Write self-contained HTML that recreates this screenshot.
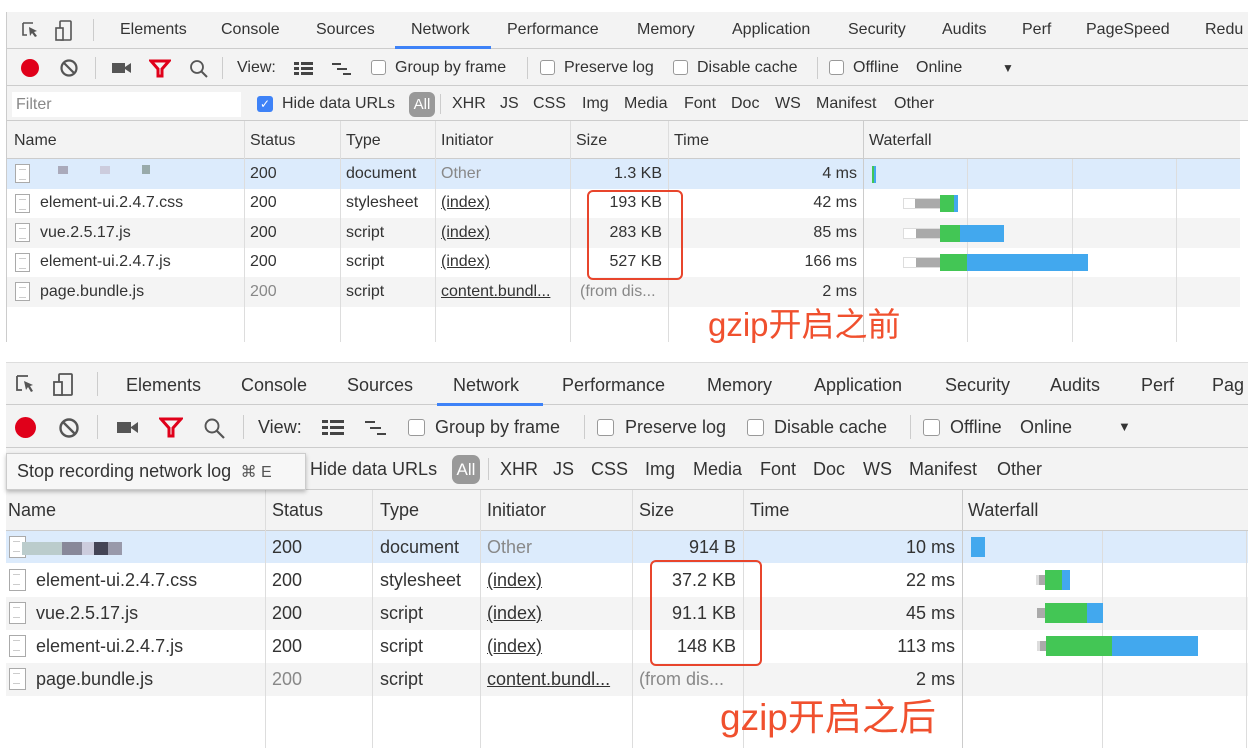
<!DOCTYPE html>
<html><head><meta charset="utf-8"><style>
*{margin:0;padding:0;box-sizing:border-box}
body{width:1248px;height:748px;background:#fff;position:relative;overflow:hidden;font-family:"Liberation Sans",Arial,sans-serif;color:#333}
.a{position:absolute}
.t{position:absolute;white-space:nowrap;line-height:20px}
.p1 .t{font-size:16px}
.p2 .t{font-size:18px;line-height:22px}
.bar{position:absolute;background:#f3f3f3}
.bl{position:absolute;background:#ccc}
.cb{position:absolute;width:15px;height:15px;border:1px solid #999;border-radius:3px;background:#fff}
.vl{position:absolute;width:1px;background:#ddd}
.rec{position:absolute;border-radius:50%;background:#e0001a}
.g{color:#888}
.u{text-decoration:underline}
.fi{position:absolute;width:15px;height:19px;border:1px solid #aaa;background:#fff}
.fi:after{content:"";position:absolute;left:3px;top:4px;width:7px;height:9px;border-top:1px solid #ccc;border-bottom:1px solid #ccc;}
.r{text-align:right}
.red{position:absolute;color:#f0502e;font-family:"Liberation Sans","Noto Sans CJK SC",sans-serif;white-space:nowrap}
</style></head><body>

<div class="p1">
<div class="bar" style="left:6px;top:12px;width:1242px;height:37px;border-bottom:1px solid #ccc"></div>
<div class="bar" style="left:6px;top:49px;width:1242px;height:37px;border-bottom:1px solid #ccc"></div>
<div class="bar" style="left:6px;top:86px;width:1242px;height:35px;border-bottom:1px solid #ccc"></div>
<div class="bar" style="left:6px;top:121px;width:1234px;height:38px;border-bottom:1px solid #ccc"></div>
<div class="a" style="left:6px;top:12px;width:1px;height:330px;background:#ccc"></div>
<div class="a" style="left:395px;top:46px;width:96px;height:3px;background:#3e82f7"></div>
<svg class="a" style="left:20px;top:19px" width="60" height="24"><path d="M3 4h10M3 4v12h4" stroke="#555" stroke-width="1.6" fill="none"/><path d="M9 8l8 4-3 1 3 4-2 1-3-4-2 3z" fill="#555"/><rect x="40" y="2" width="11" height="19" rx="1" stroke="#555" stroke-width="1.6" fill="none"/><rect x="36" y="9" width="7" height="12" stroke="#555" stroke-width="1.6" fill="#f3f3f3"/></svg>
<div class="bl" style="left:93px;top:19px;width:1px;height:22px"></div>
<span class="t" style="left:120px;top:20px">Elements</span>
<span class="t" style="left:221px;top:20px">Console</span>
<span class="t" style="left:316px;top:20px">Sources</span>
<span class="t" style="left:411px;top:20px">Network</span>
<span class="t" style="left:507px;top:20px">Performance</span>
<span class="t" style="left:637px;top:20px">Memory</span>
<span class="t" style="left:732px;top:20px">Application</span>
<span class="t" style="left:848px;top:20px">Security</span>
<span class="t" style="left:942px;top:20px">Audits</span>
<span class="t" style="left:1022px;top:20px">Perf</span>
<span class="t" style="left:1086px;top:20px">PageSpeed</span>
<span class="t" style="left:1205px;top:20px">Redu</span>
<div class="rec" style="left:21px;top:59px;width:18px;height:18px"></div>
<svg class="a" style="left:59px;top:58px" width="20" height="20"><circle cx="10" cy="10" r="7.5" stroke="#555" stroke-width="2.2" fill="none"/><path d="M5 5l10 10" stroke="#555" stroke-width="2.2"/></svg>
<div class="bl" style="left:95px;top:57px;width:1px;height:22px"></div>
<svg class="a" style="left:111px;top:60px" width="22" height="16"><rect x="1" y="3" width="13" height="10" fill="#555"/><path d="M14 7l6-4v10l-6-4z" fill="#555"/></svg>
<svg class="a" style="left:149px;top:59px" width="22" height="20"><path d="M2 2h18l-7 8v7h-4v-7z" fill="none" stroke="#e0001a" stroke-width="3"/></svg>
<svg class="a" style="left:188px;top:58px" width="22" height="22"><circle cx="9" cy="9" r="6" stroke="#555" stroke-width="1.8" fill="none"/><path d="M13 13l6 6" stroke="#555" stroke-width="2"/></svg>
<div class="bl" style="left:222px;top:57px;width:1px;height:22px"></div>
<span class="t" style="left:237px;top:58px">View:</span>
<svg class="a" style="left:294px;top:60px" width="60" height="18"><g fill="#444"><rect x="0" y="2" width="5" height="3"/><rect x="7" y="2" width="12" height="3"/><rect x="0" y="7" width="5" height="3"/><rect x="7" y="7" width="12" height="3"/><rect x="0" y="12" width="5" height="3"/><rect x="7" y="12" width="12" height="3"/><rect x="38" y="3" width="9" height="2"/><rect x="43" y="8" width="10" height="2"/><rect x="49" y="13" width="8" height="2"/></g></svg>
<div class="cb" style="left:371px;top:60px"></div>
<span class="t" style="left:395px;top:58px">Group by frame</span>
<div class="bl" style="left:527px;top:57px;width:1px;height:22px"></div>
<div class="cb" style="left:540px;top:60px"></div>
<span class="t" style="left:564px;top:58px">Preserve log</span>
<div class="cb" style="left:673px;top:60px"></div>
<span class="t" style="left:697px;top:58px">Disable cache</span>
<div class="bl" style="left:817px;top:57px;width:1px;height:22px"></div>
<div class="cb" style="left:829px;top:60px"></div>
<span class="t" style="left:853px;top:58px">Offline</span>
<span class="t" style="left:916px;top:58px">Online</span>
<span class="t" style="left:1002px;top:58px;font-size:12px">▼</span>
<div class="a" style="left:12px;top:92px;width:229px;height:25px;background:#fff"></div>
<span class="t g" style="left:16px;top:95px">Filter</span>
<div class="a" style="left:257px;top:96px;width:16px;height:16px;background:#3e82f7;border-radius:3px;color:#fff;font-size:12px;line-height:16px;text-align:center">✓</div>
<span class="t" style="left:282px;top:94px">Hide data URLs</span>
<div class="a" style="left:409px;top:92px;width:26px;height:25px;background:#999;border-radius:6px;color:#fff;font-size:15px;line-height:25px;text-align:center">All</div>
<div class="bl" style="left:440px;top:94px;width:1px;height:20px"></div>
<span class="t" style="left:452px;top:94px">XHR</span>
<span class="t" style="left:500px;top:94px">JS</span>
<span class="t" style="left:533px;top:94px">CSS</span>
<span class="t" style="left:582px;top:94px">Img</span>
<span class="t" style="left:624px;top:94px">Media</span>
<span class="t" style="left:684px;top:94px">Font</span>
<span class="t" style="left:731px;top:94px">Doc</span>
<span class="t" style="left:775px;top:94px">WS</span>
<span class="t" style="left:816px;top:94px">Manifest</span>
<span class="t" style="left:894px;top:94px">Other</span>
<span class="t" style="left:14px;top:131px">Name</span>
<span class="t" style="left:250px;top:131px">Status</span>
<span class="t" style="left:346px;top:131px">Type</span>
<span class="t" style="left:441px;top:131px">Initiator</span>
<span class="t" style="left:576px;top:131px">Size</span>
<span class="t" style="left:674px;top:131px">Time</span>
<span class="t" style="left:869px;top:131px">Waterfall</span>
<div class="a" style="left:7px;top:159px;width:1233px;height:30px;background:#dcebfc"></div>
<div class="a" style="left:7px;top:218px;width:1233px;height:30px;background:#f4f4f4"></div>
<div class="a" style="left:7px;top:277px;width:1233px;height:30px;background:#f4f4f4"></div>
<div class="vl" style="left:244px;top:121px;height:221px"></div>
<div class="vl" style="left:340px;top:121px;height:221px"></div>
<div class="vl" style="left:435px;top:121px;height:221px"></div>
<div class="vl" style="left:570px;top:121px;height:221px"></div>
<div class="vl" style="left:668px;top:121px;height:221px"></div>
<div class="vl" style="left:863px;top:121px;height:221px;background:#ccc"></div>
<div class="vl" style="left:967px;top:159px;height:183px"></div>
<div class="vl" style="left:1072px;top:159px;height:183px"></div>
<div class="vl" style="left:1176px;top:159px;height:183px"></div>
<div class="fi" style="left:15px;top:164px"></div>
<div class="a" style="left:58px;top:166px;width:10px;height:8px;background:#aab"></div>
<div class="a" style="left:100px;top:166px;width:10px;height:8px;background:#ccd"></div>
<div class="a" style="left:142px;top:165px;width:8px;height:9px;background:#9aa"></div>
<div class="fi" style="left:15px;top:194px"></div>
<div class="fi" style="left:15px;top:223px"></div>
<div class="fi" style="left:15px;top:253px"></div>
<div class="fi" style="left:15px;top:282px"></div>
<span class="t" style="left:40px;top:193px">element-ui.2.4.7.css</span>
<span class="t" style="left:40px;top:223px">vue.2.5.17.js</span>
<span class="t" style="left:40px;top:252px">element-ui.2.4.7.js</span>
<span class="t" style="left:40px;top:282px">page.bundle.js</span>
<span class="t" style="left:250px;top:164px">200</span>
<span class="t" style="left:250px;top:193px">200</span>
<span class="t" style="left:250px;top:223px">200</span>
<span class="t" style="left:250px;top:252px">200</span>
<span class="t g" style="left:250px;top:282px">200</span>
<span class="t" style="left:346px;top:164px">document</span>
<span class="t" style="left:346px;top:193px">stylesheet</span>
<span class="t" style="left:346px;top:223px">script</span>
<span class="t" style="left:346px;top:252px">script</span>
<span class="t" style="left:346px;top:282px">script</span>
<span class="t g" style="left:441px;top:164px">Other</span>
<span class="t u" style="left:441px;top:193px">(index)</span>
<span class="t u" style="left:441px;top:223px">(index)</span>
<span class="t u" style="left:441px;top:252px">(index)</span>
<span class="t u" style="left:441px;top:282px">content.bundl...</span>
<span class="t r" style="left:570px;width:92px;top:164px">1.3 KB</span>
<span class="t r" style="left:570px;width:92px;top:193px">193 KB</span>
<span class="t r" style="left:570px;width:92px;top:223px">283 KB</span>
<span class="t r" style="left:570px;width:92px;top:252px">527 KB</span>
<span class="t g" style="left:580px;top:282px">(from dis...</span>
<span class="t r" style="left:668px;width:189px;top:164px">4 ms</span>
<span class="t r" style="left:668px;width:189px;top:193px">42 ms</span>
<span class="t r" style="left:668px;width:189px;top:223px">85 ms</span>
<span class="t r" style="left:668px;width:189px;top:252px">166 ms</span>
<span class="t r" style="left:668px;width:189px;top:282px">2 ms</span>
<div class="a" style="left:872px;top:166px;width:2px;height:17px;background:#43c655"></div>
<div class="a" style="left:874px;top:166px;width:2px;height:17px;background:#42a8ee"></div>
<div class="a" style="left:904px;top:199px;width:36px;height:9px;background:#aaa;border-left:11px solid #fff;outline:1px solid #ddd"></div>
<div class="a" style="left:940px;top:195px;width:14px;height:17px;background:#43c655"></div>
<div class="a" style="left:954px;top:195px;width:4px;height:17px;background:#42a8ee"></div>
<div class="a" style="left:904px;top:229px;width:36px;height:9px;background:#aaa;border-left:12px solid #fff;outline:1px solid #ddd"></div>
<div class="a" style="left:940px;top:225px;width:20px;height:17px;background:#43c655"></div>
<div class="a" style="left:960px;top:225px;width:44px;height:17px;background:#42a8ee"></div>
<div class="a" style="left:904px;top:258px;width:36px;height:9px;background:#aaa;border-left:12px solid #fff;outline:1px solid #ddd"></div>
<div class="a" style="left:940px;top:254px;width:27px;height:17px;background:#43c655"></div>
<div class="a" style="left:967px;top:254px;width:121px;height:17px;background:#42a8ee"></div>
</div>
<div class="a" style="left:587px;top:190px;width:96px;height:90px;border:2px solid #e8452c;border-radius:6px"></div>
<span class="red" style="left:708px;top:303px;font-size:33px;line-height:44px">gzip开启之前</span>

<div class="p2">
<div class="bar" style="left:6px;top:362px;width:1242px;height:43px;border-bottom:1px solid #ccc;border-top:1px solid #ddd"></div>
<div class="bar" style="left:6px;top:405px;width:1242px;height:43px;border-bottom:1px solid #ccc"></div>
<div class="bar" style="left:6px;top:448px;width:1242px;height:42px;border-bottom:1px solid #ccc"></div>
<div class="bar" style="left:6px;top:490px;width:1242px;height:41px;border-bottom:1px solid #ccc"></div>
<div class="a" style="left:437px;top:403px;width:106px;height:3px;background:#3e82f7"></div>
<svg class="a" style="left:14px;top:372px" width="70" height="26"><path d="M3 4h11M3 4v14h5" stroke="#555" stroke-width="1.8" fill="none"/><path d="M10 9l9 4-3 1 3 5-2 1-3-5-2 3z" fill="#555"/><rect x="45" y="2" width="13" height="21" rx="1" stroke="#555" stroke-width="1.8" fill="none"/><rect x="40" y="10" width="8" height="13" stroke="#555" stroke-width="1.8" fill="#f3f3f3"/></svg>
<div class="bl" style="left:97px;top:372px;width:1px;height:24px"></div>
<span class="t" style="left:126px;top:374px">Elements</span>
<span class="t" style="left:241px;top:374px">Console</span>
<span class="t" style="left:347px;top:374px">Sources</span>
<span class="t" style="left:453px;top:374px">Network</span>
<span class="t" style="left:562px;top:374px">Performance</span>
<span class="t" style="left:707px;top:374px">Memory</span>
<span class="t" style="left:814px;top:374px">Application</span>
<span class="t" style="left:945px;top:374px">Security</span>
<span class="t" style="left:1050px;top:374px">Audits</span>
<span class="t" style="left:1141px;top:374px">Perf</span>
<span class="t" style="left:1212px;top:374px">Pag</span>
<div class="rec" style="left:15px;top:417px;width:21px;height:21px"></div>
<svg class="a" style="left:57px;top:416px" width="24" height="24"><circle cx="12" cy="12" r="8.5" stroke="#555" stroke-width="2.4" fill="none"/><path d="M6 6l12 12" stroke="#555" stroke-width="2.4"/></svg>
<div class="bl" style="left:97px;top:415px;width:1px;height:24px"></div>
<svg class="a" style="left:116px;top:419px" width="24" height="18"><rect x="1" y="3" width="14" height="11" fill="#555"/><path d="M15 8l7-5v11l-7-5z" fill="#555"/></svg>
<svg class="a" style="left:159px;top:417px" width="24" height="22"><path d="M2 2h20l-8 9v8h-4v-8z" fill="none" stroke="#e0001a" stroke-width="3"/></svg>
<svg class="a" style="left:202px;top:416px" width="24" height="24"><circle cx="10" cy="10" r="6.5" stroke="#555" stroke-width="1.9" fill="none"/><path d="M15 15l7 7" stroke="#555" stroke-width="2.2"/></svg>
<div class="bl" style="left:243px;top:415px;width:1px;height:24px"></div>
<span class="t" style="left:258px;top:416px">View:</span>
<svg class="a" style="left:322px;top:418px" width="70" height="20"><g fill="#444"><rect x="0" y="2" width="6" height="3"/><rect x="8" y="2" width="14" height="3"/><rect x="0" y="8" width="6" height="3"/><rect x="8" y="8" width="14" height="3"/><rect x="0" y="14" width="6" height="3"/><rect x="8" y="14" width="14" height="3"/><rect x="43" y="3" width="10" height="2"/><rect x="48" y="9" width="11" height="2"/><rect x="55" y="15" width="9" height="2"/></g></svg>
<div class="cb" style="left:408px;top:419px;width:17px;height:17px"></div>
<span class="t" style="left:435px;top:416px">Group by frame</span>
<div class="bl" style="left:584px;top:415px;width:1px;height:24px"></div>
<div class="cb" style="left:597px;top:419px;width:17px;height:17px"></div>
<span class="t" style="left:625px;top:416px">Preserve log</span>
<div class="cb" style="left:747px;top:419px;width:17px;height:17px"></div>
<span class="t" style="left:774px;top:416px">Disable cache</span>
<div class="bl" style="left:910px;top:415px;width:1px;height:24px"></div>
<div class="cb" style="left:923px;top:419px;width:17px;height:17px"></div>
<span class="t" style="left:950px;top:416px">Offline</span>
<span class="t" style="left:1020px;top:416px">Online</span>
<span class="t" style="left:1118px;top:416px;font-size:13px">▼</span>
<span class="t" style="left:310px;top:458px">Hide data URLs</span>
<div class="a" style="left:452px;top:455px;width:28px;height:29px;background:#999;border-radius:7px;color:#fff;font-size:17px;line-height:29px;text-align:center">All</div>
<div class="bl" style="left:488px;top:458px;width:1px;height:22px"></div>
<span class="t" style="left:500px;top:458px">XHR</span>
<span class="t" style="left:553px;top:458px">JS</span>
<span class="t" style="left:591px;top:458px">CSS</span>
<span class="t" style="left:645px;top:458px">Img</span>
<span class="t" style="left:693px;top:458px">Media</span>
<span class="t" style="left:760px;top:458px">Font</span>
<span class="t" style="left:813px;top:458px">Doc</span>
<span class="t" style="left:863px;top:458px">WS</span>
<span class="t" style="left:909px;top:458px">Manifest</span>
<span class="t" style="left:997px;top:458px">Other</span>
<span class="t" style="left:8px;top:499px">Name</span>
<span class="t" style="left:272px;top:499px">Status</span>
<span class="t" style="left:380px;top:499px">Type</span>
<span class="t" style="left:487px;top:499px">Initiator</span>
<span class="t" style="left:639px;top:499px">Size</span>
<span class="t" style="left:750px;top:499px">Time</span>
<span class="t" style="left:968px;top:499px">Waterfall</span>
<div class="a" style="left:6px;top:531px;width:1242px;height:32px;background:#dcebfc"></div>
<div class="a" style="left:6px;top:597px;width:1242px;height:33px;background:#f4f4f4"></div>
<div class="a" style="left:6px;top:663px;width:1242px;height:33px;background:#f4f4f4"></div>
<div class="vl" style="left:265px;top:490px;height:258px"></div>
<div class="vl" style="left:372px;top:490px;height:258px"></div>
<div class="vl" style="left:480px;top:490px;height:258px"></div>
<div class="vl" style="left:632px;top:490px;height:258px"></div>
<div class="vl" style="left:743px;top:490px;height:258px"></div>
<div class="vl" style="left:962px;top:490px;height:258px;background:#ccc"></div>
<div class="vl" style="left:1102px;top:531px;height:217px"></div>
<div class="vl" style="left:1246px;top:531px;height:217px"></div>
<div class="fi" style="left:9px;top:536px;width:17px;height:22px"></div>
<div class="a" style="left:22px;top:542px;width:100px;height:13px;background:linear-gradient(90deg,#bcc 0 40%,#889 40% 60%,#ccd 60% 72%,#445 72% 86%,#99a 86%)"></div>
<div class="fi" style="left:9px;top:569px;width:17px;height:22px"></div>
<div class="fi" style="left:9px;top:602px;width:17px;height:22px"></div>
<div class="fi" style="left:9px;top:635px;width:17px;height:22px"></div>
<div class="fi" style="left:9px;top:668px;width:17px;height:22px"></div>
<span class="t" style="left:36px;top:569px">element-ui.2.4.7.css</span>
<span class="t" style="left:36px;top:602px">vue.2.5.17.js</span>
<span class="t" style="left:36px;top:635px">element-ui.2.4.7.js</span>
<span class="t" style="left:36px;top:668px">page.bundle.js</span>
<span class="t" style="left:272px;top:536px">200</span>
<span class="t" style="left:272px;top:569px">200</span>
<span class="t" style="left:272px;top:602px">200</span>
<span class="t" style="left:272px;top:635px">200</span>
<span class="t g" style="left:272px;top:668px">200</span>
<span class="t" style="left:380px;top:536px">document</span>
<span class="t" style="left:380px;top:569px">stylesheet</span>
<span class="t" style="left:380px;top:602px">script</span>
<span class="t" style="left:380px;top:635px">script</span>
<span class="t" style="left:380px;top:668px">script</span>
<span class="t g" style="left:487px;top:536px">Other</span>
<span class="t u" style="left:487px;top:569px">(index)</span>
<span class="t u" style="left:487px;top:602px">(index)</span>
<span class="t u" style="left:487px;top:635px">(index)</span>
<span class="t u" style="left:487px;top:668px">content.bundl...</span>
<span class="t r" style="left:632px;width:104px;top:536px">914 B</span>
<span class="t r" style="left:632px;width:104px;top:569px">37.2 KB</span>
<span class="t r" style="left:632px;width:104px;top:602px">91.1 KB</span>
<span class="t r" style="left:632px;width:104px;top:635px">148 KB</span>
<span class="t g" style="left:639px;top:668px">(from dis...</span>
<span class="t r" style="left:743px;width:212px;top:536px">10 ms</span>
<span class="t r" style="left:743px;width:212px;top:569px">22 ms</span>
<span class="t r" style="left:743px;width:212px;top:602px">45 ms</span>
<span class="t r" style="left:743px;width:212px;top:635px">113 ms</span>
<span class="t r" style="left:743px;width:212px;top:668px">2 ms</span>
<div class="a" style="left:971px;top:537px;width:14px;height:20px;background:#42a8ee"></div>
<div class="a" style="left:1036px;top:575px;width:9px;height:10px;background:#aaa;border-left:3px solid #ddd"></div>
<div class="a" style="left:1045px;top:570px;width:17px;height:20px;background:#43c655"></div>
<div class="a" style="left:1062px;top:570px;width:8px;height:20px;background:#42a8ee"></div>
<div class="a" style="left:1037px;top:608px;width:8px;height:10px;background:#aaa"></div>
<div class="a" style="left:1045px;top:603px;width:42px;height:20px;background:#43c655"></div>
<div class="a" style="left:1087px;top:603px;width:16px;height:20px;background:#42a8ee"></div>
<div class="a" style="left:1037px;top:641px;width:9px;height:10px;background:#aaa;border-left:3px solid #ddd"></div>
<div class="a" style="left:1046px;top:636px;width:66px;height:20px;background:#43c655"></div>
<div class="a" style="left:1112px;top:636px;width:86px;height:20px;background:#42a8ee"></div>
</div>
<div class="a" style="left:6px;top:453px;width:300px;height:37px;background:#f7f7f7;border:1px solid #ccc;box-shadow:0 2px 4px rgba(0,0,0,.25)"></div>
<span class="t" style="left:17px;top:460px;font-size:18px;line-height:22px">Stop recording network log <span style="color:#555;font-size:16px">&nbsp;⌘ E</span></span>
<div class="a" style="left:650px;top:560px;width:112px;height:106px;border:2px solid #e8452c;border-radius:6px"></div>
<span class="red" style="left:720px;top:694px;font-size:37px;line-height:48px">gzip开启之后</span>
</body></html>
